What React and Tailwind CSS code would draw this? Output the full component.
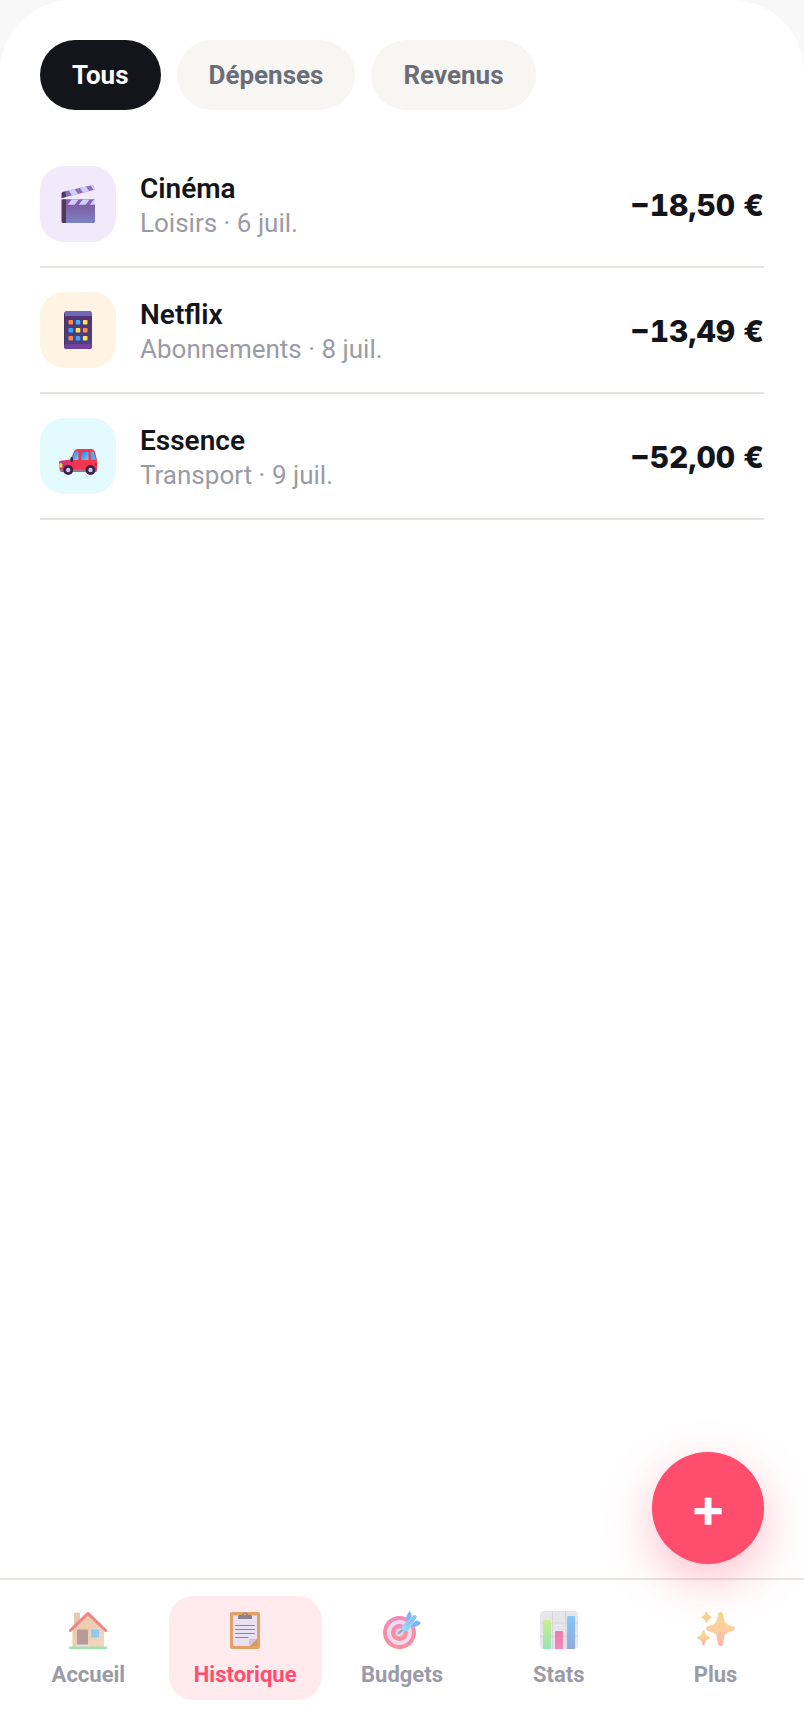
import React, { useState } from 'react';

const ClapperIcon = () => (
    <svg viewBox="0 0 38 38" className="size-[38px]" aria-hidden="true">
        <defs>
            <linearGradient id="clapBody" x1="0" y1="0" x2="0" y2="1">
                <stop offset="0" stopColor="#7f5490" />
                <stop offset="1" stopColor="#7d82c8" />
            </linearGradient>
            <clipPath id="clapTop"><path d="M3 7 32.500 .2a2 2 0 0 1 2.300 1.400l.7 3.200L3.200 13z" /></clipPath>
            <clipPath id="clapMid"><path d="M3 14.500h33v5.200H3z" /></clipPath>
        </defs>
        <rect x="3" y="14.500" width="33" height="23.500" rx="1.500" fill="url(#clapBody)" />
        <g clipPath="url(#clapTop)">
            <path d="M0 0h38v14H0z" fill="#8d6fb8" />
            <path d="m8 3 6 9 6-1.500-6-9zM19 0l6 9 6-1.500L25-1.500zM30-2l6 9 6-1.500-6-9z" fill="#cfcffc" />
        </g>
        <g clipPath="url(#clapMid)">
            <path d="M3 14h34v6H3z" fill="#875db4" />
            <path d="M13 14h7l-4.500 6h-7zM24 14h7l-4.500 6h-7zM35 14h7l-4.500 6h-7z" fill="#cfcffc" />
        </g>
        <path d="M2.500 8.500c0-1 1-1.400 2-1.600L6.500 6.400 7 11.800l-4.500 1.500zM2.500 14.500H7V38H4a1.500 1.500 0 0 1-1.500-1.500z" fill="#4f3a5e" />
    </svg>
);

const dots = ['#ff8b45', '#35b5ff', '#ffe15a', '#35a5ff', '#ffe15a', '#ff8b45', '#ff8145', '#35a5ff', '#ffe15a'];

const PhoneIcon = () => (
    <svg viewBox="0 0 38 38" className="size-[38px]" aria-hidden="true">
        <defs>
            <linearGradient id="phoneScreen" x1="0" y1="0" x2="0" y2="1">
                <stop offset="0" stopColor="#58306f" />
                <stop offset="1" stopColor="#434684" />
            </linearGradient>
        </defs>
        <rect x="5" width="28" height="38" rx="2.5" fill="#6c69bd" />
        <path d="M5 32h28v3.5a2.5 2.5 0 0 1-2.5 2.5h-23A2.5 2.5 0 0 1 5 35.5z" fill="#74429c" />
        <path d="M5 5h28v28H5z" fill="url(#phoneScreen)" />
        <path d="M5 3h1v31H5z" fill="#45325f" />
        {dots.map((color, i) => (
            <rect key={i} x={9.5 + (i % 3) * 7.2} y={9 + Math.floor(i / 3) * 8} width="4.6" height="4.6" rx=".8" fill={color} />
        ))}
    </svg>
);

const CarIcon = () => (
    <svg viewBox="0 0 38 38" className="size-[38px]" aria-hidden="true">
        <defs>
            <linearGradient id="carBody" x1="0" y1="0" x2="1" y2="0">
                <stop offset="0" stopColor="#c6318d" />
                <stop offset=".4" stopColor="#f03550" />
                <stop offset="1" stopColor="#f8374a" />
            </linearGradient>
            <linearGradient id="carGlass" x1="0" y1="0" x2="1" y2="1">
                <stop offset="0" stopColor="#2279e6" />
                <stop offset="1" stopColor="#6fd4fb" />
            </linearGradient>
        </defs>
        <path d="M1 32h37v1.5a1.5 1.5 0 0 1-1.5 1.5H2a1 1 0 0 1-1-1z" fill="#9c7691" />
        <path d="M0 25.500q0-1.500 2-1.800l9.500-1.200 3.500-8Q16 12 18.500 12h14q2.800 0 3.400 2.500L38 23v9.500H.5z" fill="url(#carBody)" />
        <path d="m12 23 3.500-7.500q.7-1.300 2-1.300h1.800V23z" fill="url(#carGlass)" />
        <path d="M22 14.800h7.500V23H22z" fill="url(#carGlass)" />
        <path d="M31.500 14.500h2q1.300 0 1.600 1.500L37.300 23h-4.800z" fill="#42b0f5" />
        <rect x="11.500" y="20" width="2.500" height="5" rx="1.200" fill="#37224e" />
        <path d="M.3 26.300h2q1 0 1 1v3.300h-3z" fill="#ffd83c" />
        <circle cx="37" cy="27.500" r="1.300" fill="#b5243e" />
        <circle cx="9.200" cy="33" r="5" fill="#3a224c" />
        <circle cx="31.500" cy="33" r="5" fill="#3a224c" />
        <circle cx="9.200" cy="33" r="2.200" fill="#d9c6e8" />
        <circle cx="31.500" cy="33" r="2.200" fill="#d9c6e8" />
    </svg>
);

const HouseIcon = () => (
    <svg viewBox="0 0 38 38" className="size-[38px]" aria-hidden="true">
        <defs>
            <linearGradient id="houseWall" x1="0" y1="0" x2="1" y2="1">
                <stop offset="0" stopColor="#ebc5a5" />
                <stop offset="1" stopColor="#f2d8c2" />
            </linearGradient>
        </defs>
        <rect x="5" y="1.5" width="6" height="15" rx="1" fill="#e6c9aa" />
        <path d="M3.500 19 19 4l16 15v17H3.500z" fill="url(#houseWall)" />
        <path d="M0 35.500h38v1.500a1 1 0 0 1-1 1H1a1 1 0 0 1-1-1z" fill="#9be5ad" />
        <rect x="8" y="18.500" width="11" height="15.500" rx="1" fill="#b79a96" />
        <path d="M7 33.500h13v2H7z" fill="#dfe3e6" />
        <rect x="22" y="18.500" width="8" height="8" rx=".5" fill="#8dcbf7" />
        <path d="M1.300 19.500 19 2.300l17.700 17.200" fill="none" stroke="#ec8785" strokeWidth="3" strokeLinecap="round" strokeLinejoin="round" />
    </svg>
);

const ClipboardIcon = () => (
    <svg viewBox="0 0 38 38" className="size-[38px]" aria-hidden="true">
        <rect x="4" y="1" width="30" height="37" rx="2" fill="#e3a067" />
        <path d="M7 4.500h24V28l-7 7H8a1 1 0 0 1-1-1z" fill="#e9e0f1" />
        <path d="M31 28v7h-7z" fill="#d9955c" />
        <path d="M23 35v-6a1 1 0 0 1 1-1h7z" fill="#cfc3dd" />
        <path d="M12 8V5.500Q12 4 13.500 4h2.200a3.400 3.400 0 0 1 6.600 0h2.200Q26 4 26 5.500V8z" fill="#8d7f8d" />
        <circle cx="19" cy="3.500" r="1.100" fill="#e3b590" />
        <path d="M9.500 14.500h19M9.500 18.500h19M9.500 22.500h19M9.500 26.500H22" stroke="#8f8799" strokeWidth="1" strokeLinecap="round" />
    </svg>
);

const TargetIcon = () => (
    <svg viewBox="0 0 38 38" className="size-[38px]" aria-hidden="true">
        <defs>
            <linearGradient id="ringPink" x1="0" y1="0" x2="0" y2="1">
                <stop offset="0" stopColor="#f489bd" />
                <stop offset="1" stopColor="#fa8f98" />
            </linearGradient>
            <linearGradient id="dart" x1="0" y1="1" x2="1" y2="0">
                <stop offset="0" stopColor="#98daf8" />
                <stop offset="1" stopColor="#86c4f4" />
            </linearGradient>
        </defs>
        <circle cx="16.500" cy="21.500" r="16.500" fill="url(#ringPink)" />
        <circle cx="16.500" cy="21.500" r="12.500" fill="#e9dcee" />
        <circle cx="16.500" cy="21.500" r="8.500" fill="url(#ringPink)" />
        <circle cx="16.500" cy="21.500" r="4.300" fill="#ddd0e2" />
        <path d="m16 22 4.500-4" stroke="#a4a0b0" strokeWidth="2" strokeLinecap="round" />
        <path d="M23.500 8.500Q22.500 5 26.500 0q2 1.500 2.200 5L25 13zM28 14l5-4.500q4 .5 5 2.500-4 4.500-8.500 4z" fill="#7db6f1" />
        <path d="M18.500 15.500 23 11l7.500-6.500q1.500-.8 2.500 0t.5 2.200L29 14l-4 5.500q-3 1.500-5.500 0-1.800-1.500-1-4z" fill="url(#dart)" />
        <path d="m23.500 14.500 7-7" stroke="#7fb9ee" strokeWidth="1" strokeLinecap="round" />
    </svg>
);

const ChartIcon = () => (
    <svg viewBox="0 0 38 38" className="size-[38px]" aria-hidden="true">
        <defs>
            <linearGradient id="barGreen" x1="0" y1="0" x2="0" y2="1">
                <stop offset="0" stopColor="#cbed8c" />
                <stop offset="1" stopColor="#92e5b4" />
            </linearGradient>
            <linearGradient id="barPink" x1="0" y1="0" x2="0" y2="1">
                <stop offset="0" stopColor="#f07ca9" />
                <stop offset="1" stopColor="#ef89bd" />
            </linearGradient>
            <linearGradient id="barBlue" x1="0" y1="0" x2="0" y2="1">
                <stop offset="0" stopColor="#85c8f7" />
                <stop offset="1" stopColor="#8faadf" />
            </linearGradient>
        </defs>
        <rect width="38" height="38" rx="4" fill="#e8e4ec" />
        <path d="M12.500 0v38M25.500 0v38M0 12h38M0 25.500h38" stroke="#d9d3df" strokeWidth="1" />
        <path d="M3 10q0-1 1-1h6q1 0 1 1v28H4l-1-.3z" fill="url(#barGreen)" />
        <path d="M15 21q0-1 1-1h6q1 0 1 1v17h-8z" fill="url(#barPink)" />
        <path d="M27 6q0-1 1-1h6q1 0 1 1v31.500l-1 .5h-7z" fill="url(#barBlue)" />
    </svg>
);

const SparklesIcon = () => (
    <svg viewBox="0 0 38 38" className="size-[38px]" aria-hidden="true">
        <defs>
            <linearGradient id="spark" x1="0" y1="0" x2="0" y2="1">
                <stop offset="0" stopColor="#f5d98a" />
                <stop offset=".5" stopColor="#fdd0a0" />
                <stop offset="1" stopColor="#fcb0a2" />
            </linearGradient>
        </defs>
        <path d="M23.500 1q1.900 0 2.400 2.200l1.200 5.300q1 4.500 5 5.400l4.100 1.300q1.800.6 1.800 2.300t-1.800 2.300l-4.100 1.200q-4 .9-5 5.400l-1.200 6.600q-.5 2.200-2.400 2.200t-2.400-2.200l-1.200-6.600q-1-4.500-5-5.400l-4.100-1.200Q9 19.200 9 17.500t1.800-2.300l4.100-1.300q4-.9 5-5.400l1.200-5.300Q21.600 1 23.500 1z" fill="url(#spark)" />
        <path d="M9.500.8q.7 0 1 1.200.6 2.500 3 3.300 1 .4 1 1t-1 1q-2.400.8-3 3.500-.3 1.200-1 1.200t-1-1.200q-.6-2.700-3-3.500-1-.4-1-1t1-1q2.400-.8 3-3.300.3-1.200 1-1.200z" fill="#f5d591" />
        <path d="M6.500 19q1 0 1.200 1.500.5 4 4 5 1.300.4 1.300 1.200t-1.300 1.200q-3.500 1-4 5-.2 1.500-1.200 1.500t-1.200-1.500q-.5-4-4-5Q0 27.500 0 26.700t1.300-1.200q3.500-1 4-5Q5.500 19 6.500 19z" fill="url(#spark)" />
    </svg>
);

const filters = [
    { id: 'all', label: 'Tous' },
    { id: 'expense', label: 'Dépenses' },
    { id: 'income', label: 'Revenus' },
];

const transactions = [
    { title: 'Cinéma', category: 'Loisirs', date: '6 juil.', amount: '−18,50 €', type: 'expense', Icon: ClapperIcon, tile: 'bg-[#f1eafb]' },
    { title: 'Netflix', category: 'Abonnements', date: '8 juil.', amount: '−13,49 €', type: 'expense', Icon: PhoneIcon, tile: 'bg-[#fff4e3]' },
    { title: 'Essence', category: 'Transport', date: '9 juil.', amount: '−52,00 €', type: 'expense', Icon: CarIcon, tile: 'bg-[#e3faff]' },
];

const tabs = [
    { label: 'Accueil', href: '#accueil', Icon: HouseIcon },
    { label: 'Historique', href: '#historique', Icon: ClipboardIcon, active: true },
    { label: 'Budgets', href: '#budgets', Icon: TargetIcon },
    { label: 'Stats', href: '#stats', Icon: ChartIcon },
    { label: 'Plus', href: '#plus', Icon: SparklesIcon },
];

const App = () => {
    const [filter, setFilter] = useState('all');
    const visible = transactions.filter((t) => filter === 'all' || t.type === filter);

    return (
        <div className="min-h-screen bg-[#f8f8f8] font-['Roboto',sans-serif] text-[#14151a]">
            <div className="flex min-h-screen flex-col rounded-t-[72px] bg-white">
                <main className="flex-1 px-10 pt-10">
                    {/* Filters */}
                    <div className="flex gap-4">
                        {filters.map((f) => (
                            <button
                                key={f.id}
                                type="button"
                                aria-pressed={filter === f.id}
                                onClick={() => setFilter(f.id)}
                                className={`h-[70px] cursor-pointer rounded-full px-8 text-[26px] font-bold ${filter === f.id ? 'bg-[#14151a] text-white' : 'bg-[#f7f6f2] text-[#6b6d78]'}`}
                            >
                                {f.label}
                            </button>
                        ))}
                    </div>

                    {/* Transactions */}
                    <ul className="mt-8">
                        {visible.map(({ title, category, date, amount, Icon, tile }) => (
                            <li key={title} className="flex items-center gap-6 border-b-2 border-[#e5e5df] py-6">
                                <div className={`flex size-[76px] shrink-0 items-center justify-center rounded-3xl ${tile}`}>
                                    <Icon />
                                </div>
                                <div className="min-w-0 flex-1 pt-0.5">
                                    <p className="text-[28px] leading-9 font-semibold">{title}</p>
                                    <p className="text-[26px] leading-8 text-[#9a9ba6]">{category} · {date}</p>
                                </div>
                                <p className="pt-0.5 font-['Inter',sans-serif] text-[30px] font-extrabold whitespace-nowrap tabular-nums">{amount}</p>
                            </li>
                        ))}
                    </ul>
                </main>

                {/* Bottom navigation */}
                <nav className="sticky bottom-0 grid grid-cols-5 gap-1 border-t-2 border-[#e5e5df] bg-white px-3 pt-4 pb-5">
                    {tabs.map(({ label, href, Icon, active }) => (
                        <a
                            key={label}
                            href={href}
                            aria-current={active ? 'page' : undefined}
                            className={`flex flex-col items-center gap-3 rounded-3xl pt-[15px] pb-[11px] text-[22px] leading-7 font-bold ${active ? 'bg-[#ffebee] text-[#ff4d6d]' : 'text-[#9a9ba6]'}`}
                        >
                            <Icon />
                            {label}
                        </a>
                    ))}
                </nav>
            </div>

            <button
                type="button"
                aria-label="Ajouter une transaction"
                className="fixed right-10 bottom-[156px] size-28 cursor-pointer rounded-full bg-[#ff4d6d] font-['Inter',sans-serif] text-[54px] leading-none font-bold text-white shadow-[0_16px_48px_rgba(255,77,109,0.35)]"
            >
                +
            </button>
        </div>
    );
};

export default App;
